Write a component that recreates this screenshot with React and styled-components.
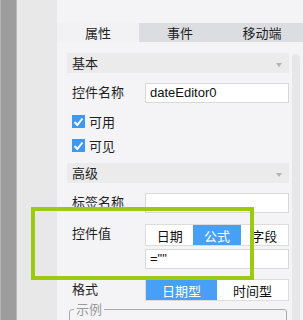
import React from 'react';
import styled, { createGlobalStyle } from 'styled-components';

const GlobalStyle = createGlobalStyle`
  html, body {
    margin: 0;
    padding: 0;
    background: #f4f4f6;
  }
  body {
    font-family: "Noto Sans CJK SC", "Liberation Sans", sans-serif;
    color: #1e1e1e;
  }
`

const Page = styled.div`
  position: relative;
  display: flex;
  width: 303px;
  height: 320px;
  overflow: hidden;
`

const DarkBar = styled.div`
  width: 15px;
  background: #9d9d9d;
  border-left: 1px solid #b4b4b4;
  border-right: 1px solid #b8b8b8;
`

const Gutter = styled.div`
  width: 40px;
  background: #e8e8e8;
`

const Panel = styled.div`
  flex: 1;
  display: flex;
  flex-direction: column;
  background: #f4f4f6;
  padding-top: 23px;
`

const Tabs = styled.div`
  display: flex;
  height: 23px;
`

const Tab = styled.div`
  flex: 1;
  display: flex;
  align-items: center;
  justify-content: center;
  font-size: 13px;
  background: ${p => (p.active ? '#f2f2f4' : '#dcdde0')};
`

const Body = styled.div`
  flex: 1;
  display: flex;
  padding-top: 11px;
`

const Main = styled.div`
  width: 222px;
  margin-left: 10px;
  display: flex;
  flex-direction: column;
`

const Scrollbar = styled.div`
  width: 8px;
  margin-left: 3px;
  margin-top: 1px;
  background: #e7e7e9;
  border-radius: 4px 4px 0 0;
`

const SectionHeader = styled.div`
  height: 20px;
  margin-top: ${p => p.mt || 0}px;
  display: flex;
  align-items: center;
  justify-content: space-between;
  padding: 0 7px 0 5px;
  background: #ebebeb;
  font-size: 13px;
  line-height: 16px;
`

const Arrow = styled.span`
  width: 0;
  height: 0;
  margin-top: 3px;
  border-left: 3.5px solid transparent;
  border-right: 3.5px solid transparent;
  border-top: 4px solid #b3b3b3;
`

const Row = styled.div`
  display: flex;
  align-items: flex-start;
  margin-top: ${p => p.mt || 10}px;
`

const Label = styled.div`
  width: 73px;
  padding-left: 5px;
  font-size: 13px;
  line-height: 16px;
  padding-top: ${p => p.pt || 1}px;
`

const Field = styled.div`
  width: 144px;
  display: flex;
  flex-direction: column;
  gap: 3px;
`

const Input = styled.div`
  box-sizing: border-box;
  height: 20px;
  background: #fff;
  border: 1px solid #d8d8d8;
  padding-left: 4px;
  font-family: "Liberation Sans", Arial, sans-serif;
  font-size: 13px;
  line-height: 18px;
  color: #111;
`

const Segmented = styled.div`
  box-sizing: border-box;
  height: 22px;
  display: flex;
  background: #fff;
  border: 1px solid #dcdcdc;
`

const Segment = styled.div`
  flex: 1;
  display: flex;
  align-items: center;
  justify-content: center;
  font-size: 13px;
  background: ${p => (p.active ? '#47a0f5' : '#fff')};
  color: ${p => (p.active ? '#fff' : '#111')};
`

const CheckRow = styled.label`
  display: flex;
  align-items: center;
  gap: 4px;
  height: 13px;
  margin-top: ${p => p.mt}px;
  padding-left: 5px;
  font-size: 13px;
`

const Box = styled.span`
  width: 13px;
  height: 13px;
  background: #3d98f0;
  display: flex;
  align-items: center;
  justify-content: center;
`

const Sample = styled.fieldset`
  margin: 1px 2px 0 2px;
  padding: 0 4px 20px;
  border: 1px solid #a9a9a9;
  border-radius: 3px;
`

const SampleLegend = styled.legend`
  padding: 0 2px;
  font-size: 13px;
  line-height: 14px;
  color: #9a9a9a;
`

const Highlight = styled.div`
  position: absolute;
  left: 31px;
  top: 207px;
  width: 215px;
  height: 65px;
  border: 4px solid #9bca10;
  pointer-events: none;
`

const Check = ({ label, mt }) => (
  <CheckRow mt={mt}>
    <Box>
      <svg width="11" height="10" viewBox="0 0 11 10">
        <path d="M1.5 5 L4.3 8 L9.5 1.5" fill="none" stroke="#fff" strokeWidth="2" />
      </svg>
    </Box>
    {label}
  </CheckRow>
)

export default function App() {
  return (
    <Page>
      <GlobalStyle />
      <DarkBar />
      <Gutter />
      <Panel>
        <Tabs>
          <Tab active>属性</Tab>
          <Tab>事件</Tab>
          <Tab>移动端</Tab>
        </Tabs>
        <Body>
          <Main>
            <SectionHeader>基本<Arrow /></SectionHeader>
            <Row>
              <Label>控件名称</Label>
              <Field><Input>dateEditor0</Input></Field>
            </Row>
            <Check label="可用" mt={12} />
            <Check label="可见" mt={11} />
            <SectionHeader mt={11}>高级<Arrow /></SectionHeader>
            <Row>
              <Label>标签名称</Label>
              <Field><Input /></Field>
            </Row>
            <Row mt={11}>
              <Label pt={0}>控件值</Label>
              <Field>
                <Segmented>
                  <Segment>日期</Segment>
                  <Segment active>公式</Segment>
                  <Segment>字段</Segment>
                </Segmented>
                <Input>=""</Input>
              </Field>
            </Row>
            <Row mt={10}>
              <Label pt={2}>格式</Label>
              <Field>
                <Segmented>
                  <Segment active>日期型</Segment>
                  <Segment>时间型</Segment>
                </Segmented>
              </Field>
            </Row>
            <Sample>
              <SampleLegend>示例</SampleLegend>
            </Sample>
          </Main>
          <Scrollbar />
        </Body>
      </Panel>
      <Highlight />
    </Page>
  );
}
